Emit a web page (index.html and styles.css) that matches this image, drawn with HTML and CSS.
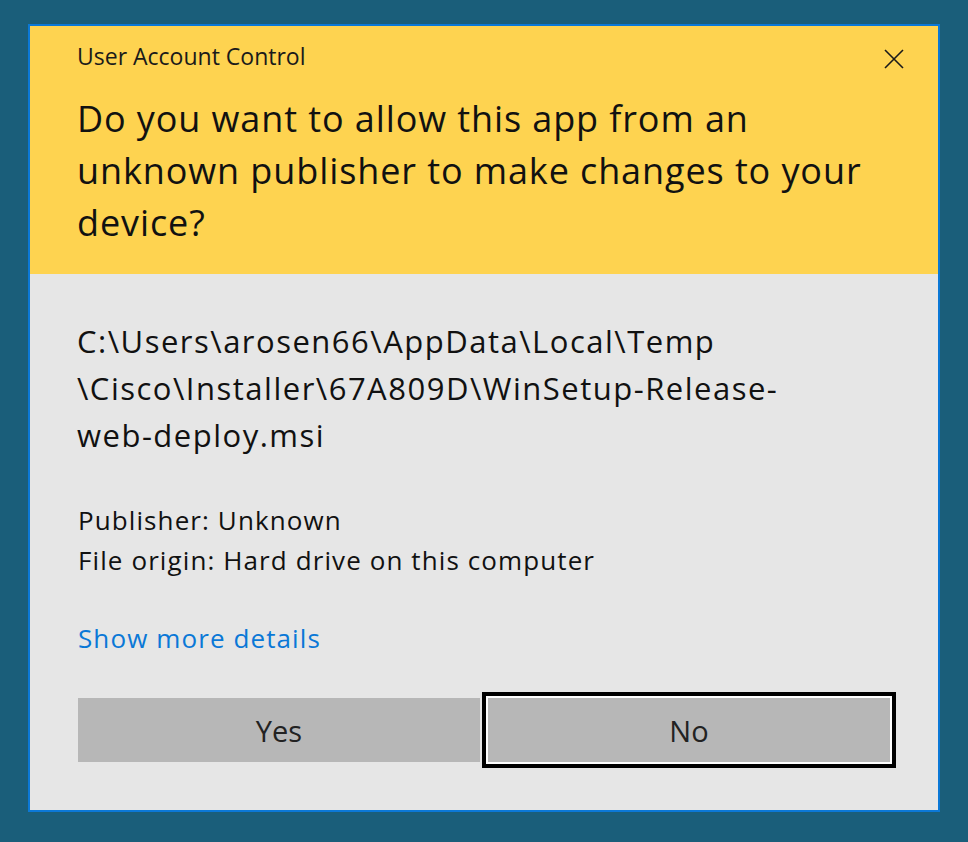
FILE: index.html
```html
<!DOCTYPE html>
<html lang="en">
<head>
<meta charset="utf-8">
<title>User Account Control</title>
<link rel="stylesheet" href="styles.css">
</head>
<body>
<div class="dialog">
  <header class="head">
    <div class="titlebar">
      <span class="title">User Account Control</span>
      <button class="close" aria-label="Close">
        <svg width="20" height="20" viewBox="0 0 20 20"><path d="M1 1L19 19M19 1L1 19" stroke="#1a1a1a" stroke-width="1.6" fill="none"/></svg>
      </button>
    </div>
    <h1 class="question">Do you want to allow this app from an<br>unknown publisher to make changes to your<br>device?</h1>
  </header>
  <main class="content">
    <p class="path">C:\Users\arosen66\AppData\Local\Temp<br>\Cisco\Installer\67A809D\WinSetup-Release-<br>web-deploy.msi</p>
    <p class="meta">Publisher: Unknown<br>File origin: Hard drive on this computer</p>
    <a class="details" href="#">Show more details</a>
    <div class="actions">
      <button class="btn">Yes</button>
      <button class="btn btn-default">No</button>
    </div>
  </main>
</div>
</body>
</html>
```
FILE: styles.css
```css
html, body {
  margin: 0;
  padding: 0;
}
body {
  background: #1a5e7a;
  padding: 24px 0 0 28px;
  font-family: "Open Sans", "Noto Sans", sans-serif;
  color: #000;
  height: 842px;
  box-sizing: border-box;
}
.dialog {
  width: 912px;
  height: 788px;
  box-sizing: border-box;
  border: 2px solid #0b78d6;
  background: #e6e6e6;
  display: flex;
  flex-direction: column;
}
.head {
  background: #fed350;
  padding: 14px 34px 24px 47px;
  height: 248px;
  box-sizing: border-box;
}
.titlebar {
  display: flex;
  justify-content: space-between;
  align-items: flex-start;
}
.title {
  font-size: 23px;
  line-height: 32px;
  color: #1a1a1a;
}
.close {
  border: 0;
  background: transparent;
  padding: 0;
  margin-top: 9px;
  width: 20px;
  height: 20px;
  display: block;
}
.close svg { display: block; }
.question {
  margin: 21px 0 0;
  font-weight: 400;
  font-size: 36px;
  line-height: 52px;
  letter-spacing: 0.9px;
  color: #111;
  white-space: nowrap;
}
.content {
  padding: 44px 48px 0 48px;
  display: flex;
  flex-direction: column;
  align-items: flex-start;
}
.path {
  margin: 0 0 0 -1px;
  font-size: 31px;
  line-height: 47px;
  letter-spacing: 1.5px;
  color: #111;
  white-space: nowrap;
}
.meta {
  margin: 41px 0 0;
  font-size: 26px;
  line-height: 40px;
  letter-spacing: 1.1px;
  color: #111;
}
.details {
  margin-top: 38px;
  font-size: 26px;
  line-height: 40px;
  letter-spacing: 1.1px;
  color: #0a78d7;
  text-decoration: none;
}
.actions {
  margin-top: 38px;
  display: flex;
  align-items: center;
  gap: 6px;
}
.btn {
  width: 402px;
  height: 64px;
  border: 0;
  background: #b7b7b7;
  font-family: inherit;
  font-size: 29px;
  color: #222;
  padding: 0;
}
.btn-default {
  width: 406px;
  height: 68px;
  border: 2px solid #fff;
  outline: 4px solid #000;
}
```
